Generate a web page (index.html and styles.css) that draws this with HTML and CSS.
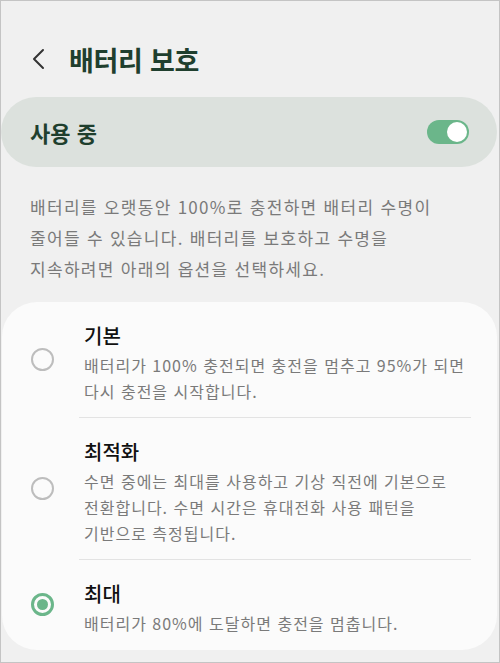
FILE: index.html
```html
<!DOCTYPE html>
<html lang="ko">
<head>
    <meta charset="utf-8">
    <title>배터리 보호</title>
    <link rel="stylesheet" href="styles.css">
</head>
<body>
    <div class="screen">
        <div class="header">
            <svg class="back-icon" width="16" height="22" viewBox="0 0 16 22">
                <path d="M12 2 L3 11 L12 20" fill="none" stroke="#333" stroke-width="2" stroke-linecap="round" stroke-linejoin="round"/>
            </svg>
            <h1>배터리 보호</h1>
        </div>

        <div class="master-switch">
            <span class="master-label">사용 중</span>
            <span class="toggle on"><span class="knob"></span></span>
        </div>

        <p class="description">배터리를 오랫동안 100%로 충전하면 배터리 수명이<br>줄어들 수 있습니다. 배터리를 보호하고 수명을<br>지속하려면 아래의 옵션을 선택하세요.</p>

        <div class="option-card">
            <div class="option">
                <span class="radio"></span>
                <div class="option-text">
                    <div class="option-title">기본</div>
                    <div class="option-desc">배터리가 100% 충전되면 충전을 멈추고 95%가 되면<br>다시 충전을 시작합니다.</div>
                </div>
            </div>
            <div class="option">
                <span class="radio"></span>
                <div class="option-text">
                    <div class="option-title">최적화</div>
                    <div class="option-desc">수면 중에는 최대를 사용하고 기상 직전에 기본으로<br>전환합니다. 수면 시간은 휴대전화 사용 패턴을<br>기반으로 측정됩니다.</div>
                </div>
            </div>
            <div class="option">
                <span class="radio checked"></span>
                <div class="option-text">
                    <div class="option-title">최대</div>
                    <div class="option-desc">배터리가 80%에 도달하면 충전을 멈춥니다.</div>
                </div>
            </div>
        </div>
    </div>
</body>
</html>
```

FILE: styles.css
```css
:root {
    --background-color: #f0f0f0;
    --card-color: #fbfbfb;
    --switch-bg: #dce1dd;
    --title-color: #1f3f2e;
    --accent-color: #6bb68a;
    --text-color: #111111;
    --muted-color: #7a7a7a;
    --divider-color: #e3e3e3;
}

body {
    margin: 0;
    font-family: "Noto Sans CJK KR", "Noto Sans", sans-serif;
    background-color: var(--background-color);
}

.screen {
    width: 500px;
    height: 663px;
    box-sizing: border-box;
    border: 1px solid #c4c4c4;
    background-color: var(--background-color);
    overflow: hidden;
}

.header {
    display: flex;
    align-items: center;
    padding: 41px 0 0 30px;
    height: 34px;
}

.back-icon {
    margin-right: 22px;
}

.header h1 {
    margin: 0;
    font-size: 27px;
    font-weight: 700;
    color: var(--title-color);
    letter-spacing: -0.3px;
}

.master-switch {
    display: flex;
    align-items: center;
    justify-content: space-between;
    height: 70px;
    margin: 21px 2px 0 0;
    padding: 0 28px 0 29px;
    border-radius: 35px;
    background-color: var(--switch-bg);
}

.master-label {
    font-size: 22px;
    font-weight: 700;
    color: var(--title-color);
}

.toggle {
    position: relative;
    width: 42px;
    height: 24px;
    border-radius: 12px;
    background-color: var(--accent-color);
}

.toggle .knob {
    position: absolute;
    top: 2px;
    right: 2px;
    width: 20px;
    height: 20px;
    border-radius: 50%;
    background: #fff;
}

.description {
    margin: 24px 10px 0 29px;
    font-size: 17px;
    line-height: 31px;
    letter-spacing: 1.3px;
    color: var(--muted-color);
}

.option-card {
    margin: 18px 2px 0 1px;
    padding: 0 26px 1px 0;
    border-radius: 35px;
    background-color: var(--card-color);
}

.option {
    display: flex;
    align-items: center;
}

.radio {
    flex: none;
    width: 23px;
    height: 23px;
    box-sizing: border-box;
    margin: 0 25px 0 29px;
    border: 2px solid #bdbdbd;
    border-radius: 50%;
}

.radio.checked {
    border: 3px solid var(--accent-color);
    display: flex;
    align-items: center;
    justify-content: center;
}

.radio.checked::after {
    content: "";
    width: 11px;
    height: 11px;
    border-radius: 50%;
    background-color: var(--accent-color);
}

.option-text {
    flex: 1;
    padding: 18px 0 13px 5px;
}

.option + .option .option-text {
    border-top: 1px solid var(--divider-color);
}

.option-title {
    font-size: 20px;
    font-weight: 500;
    color: var(--text-color);
    line-height: 32px;
}

.option-desc {
    font-size: 16px;
    line-height: 26px;
    letter-spacing: 1px;
    color: var(--muted-color);
}
```
